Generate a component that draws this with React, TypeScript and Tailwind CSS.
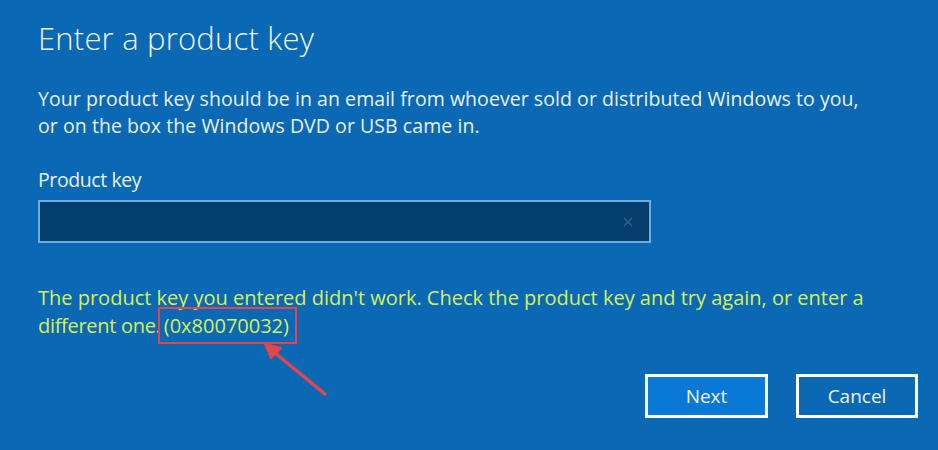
import React from 'react';

export default function App() {
  return (
    <div className="w-[938px] h-[450px] bg-[#0a68b4] text-white relative overflow-hidden font-['Open_Sans',sans-serif]">
      <div className="pl-[38px] pr-[20px] pt-[16px]">
        <h1 className="text-[31px] leading-[44px] font-light text-[#eef5fb] tracking-[0.2px]">Enter a product key</h1>

        <p className="mt-[25px] text-[19.5px] leading-[27px] text-[#e9f2fa] tracking-[0.06px]">
          Your product key should be in an email from whoever sold or distributed Windows to you,
          <br />
          or on the box the Windows DVD or USB came in.
        </p>

        <label className="block mt-[28px] text-[19.5px] leading-[26px] text-[#e9f2fa] tracking-[-0.4px]">Product key</label>

        <div className="mt-[7px] w-[613px] h-[43px] border-2 border-[#6aaee6] bg-[#053f6d] flex items-center justify-end pr-[16px]">
          <svg width="10" height="10" viewBox="0 0 10 10" className="text-[#3a6285]">
            <path d="M1 1L9 9M9 1L1 9" stroke="currentColor" strokeWidth="1.4" />
          </svg>
        </div>

        <p className="mt-[41px] text-[20px] leading-[28px] text-[#d6f05a]">
          The product key you entered didn't work. Check the product key and try again, or enter a
          <br />
          <span className="tracking-[-0.3px]">different one.</span>{' '}
          <span className="border-2 border-[#e0474c] pl-[4px] pr-[6px] pt-[3px] pb-[3px] -ml-[8px]">(0x80070032)</span>
        </p>

        <div className="mt-[34px] flex justify-end gap-[28px] w-[880px]">
          <button className="w-[123px] h-[44px] border-[3px] border-white bg-[#0a78d6] text-[19px] text-[#eef5fb]">Next</button>
          <button className="w-[122px] h-[44px] border-[3px] border-white bg-[#0a68b4] text-[19px] text-[#eef5fb]">Cancel</button>
        </div>
      </div>

      <svg className="absolute left-[255px] top-[332px]" width="80" height="70" viewBox="0 0 80 70">
        <path d="M70 62L14 16" stroke="#e0474c" strokeWidth="3.5" strokeLinecap="round" />
        <path d="M10 12L26 16L16 26Z" fill="#e0474c" stroke="#e0474c" strokeWidth="2" strokeLinejoin="round" />
      </svg>
    </div>
  );
}
